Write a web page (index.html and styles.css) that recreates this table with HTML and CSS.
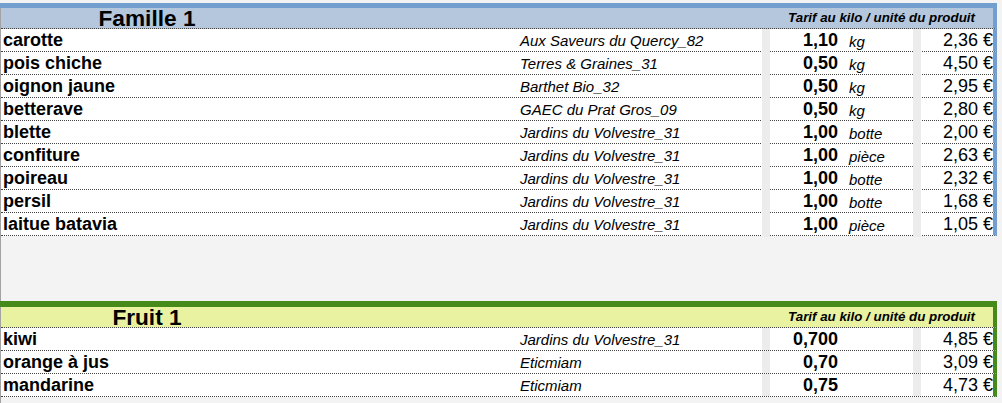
FILE: index.html
```html
<!DOCTYPE html>
<html lang="fr">
<head>
<meta charset="utf-8">
<title>Tarifs</title>
<link rel="stylesheet" href="styles.css">
</head>
<body>
<div class="sheet">
  <section class="group blue">
    <div class="bar"></div>
    <div class="head">
      <div class="title">Famille 1</div>
      <div class="tarif">Tarif au kilo / unité du produit</div>
    </div>
    <div class="row"><div class="name">carotte</div><div class="prod">Aux Saveurs du Quercy_82</div><div class="strip"></div><div class="qty">1,10</div><div class="unit">kg</div><div class="strip"></div><div class="price">2,36 €</div></div>
    <div class="row"><div class="name">pois chiche</div><div class="prod">Terres &amp; Graines_31</div><div class="strip"></div><div class="qty">0,50</div><div class="unit">kg</div><div class="strip"></div><div class="price">4,50 €</div></div>
    <div class="row"><div class="name">oignon jaune</div><div class="prod">Barthet Bio_32</div><div class="strip"></div><div class="qty">0,50</div><div class="unit">kg</div><div class="strip"></div><div class="price">2,95 €</div></div>
    <div class="row"><div class="name">betterave</div><div class="prod">GAEC du Prat Gros_09</div><div class="strip"></div><div class="qty">0,50</div><div class="unit">kg</div><div class="strip"></div><div class="price">2,80 €</div></div>
    <div class="row"><div class="name">blette</div><div class="prod">Jardins du Volvestre_31</div><div class="strip"></div><div class="qty">1,00</div><div class="unit">botte</div><div class="strip"></div><div class="price">2,00 €</div></div>
    <div class="row"><div class="name">confiture</div><div class="prod">Jardins du Volvestre_31</div><div class="strip"></div><div class="qty">1,00</div><div class="unit">pièce</div><div class="strip"></div><div class="price">2,63 €</div></div>
    <div class="row"><div class="name">poireau</div><div class="prod">Jardins du Volvestre_31</div><div class="strip"></div><div class="qty">1,00</div><div class="unit">botte</div><div class="strip"></div><div class="price">2,32 €</div></div>
    <div class="row"><div class="name">persil</div><div class="prod">Jardins du Volvestre_31</div><div class="strip"></div><div class="qty">1,00</div><div class="unit">botte</div><div class="strip"></div><div class="price">1,68 €</div></div>
    <div class="row"><div class="name">laitue batavia</div><div class="prod">Jardins du Volvestre_31</div><div class="strip"></div><div class="qty">1,00</div><div class="unit">pièce</div><div class="strip"></div><div class="price">1,05 €</div></div>
  </section>

  <section class="group green">
    <div class="bar"></div>
    <div class="head">
      <div class="title">Fruit 1</div>
      <div class="tarif">Tarif au kilo / unité du produit</div>
    </div>
    <div class="row"><div class="name">kiwi</div><div class="prod">Jardins du Volvestre_31</div><div class="strip"></div><div class="qty">0,700</div><div class="unit"></div><div class="strip"></div><div class="price">4,85 €</div></div>
    <div class="row"><div class="name">orange à jus</div><div class="prod">Eticmiam</div><div class="strip"></div><div class="qty">0,70</div><div class="unit"></div><div class="strip"></div><div class="price">3,09 €</div></div>
    <div class="row"><div class="name">mandarine</div><div class="prod">Eticmiam</div><div class="strip"></div><div class="qty">0,75</div><div class="unit"></div><div class="strip"></div><div class="price">4,73 €</div></div>
  </section>
</div>
</body>
</html>
```

FILE: styles.css
```css
html, body {
  margin: 0;
  padding: 0;
  background: #f3f3f3;
  font-family: "Liberation Sans", Arial, sans-serif;
  color: #000;
}
body {
  padding-top: 3px;
}
.sheet {
  border-left: 1px solid #a3a3a3;
  width: 996px;
  min-height: 400px;
  display: flex;
  flex-direction: column;
}
.group {
  display: flex;
  flex-direction: column;
}
.group.green {
  margin-top: 65px;
}
.bar {
  margin-left: -1px;
  height: 5px;
}
.blue .bar { background: #729fcf; }
.green .bar { background: #468a1a; height: 6px; }

.head, .row {
  border-right: 4px solid #729fcf;
  border-bottom: 1px dotted #444;
}
.green .head, .green .row {
  border-right-color: #468a1a;
}
.head {
  height: 20px;
  display: grid;
  grid-template-columns: 292px 477px 223px;
  align-items: start;
}
.blue .head { background: #b4c7dc; }
.green .head { background: #e8f2a1; }
.title {
  font-size: 22.67px;
  font-weight: bold;
  text-align: center;
  line-height: 20px;
}
.tarif {
  grid-column: 3;
  font-size: 13.33px;
  font-weight: bold;
  font-style: italic;
  text-align: center;
  line-height: 20px;
}
.row {
  height: 22px;
  background: #fff;
  display: grid;
  grid-template-columns: 516px 245px 8px 73px 70px 8px 72px;
  line-height: 22px;
  white-space: nowrap;
}
.name, .prod, .qty, .price {
  padding-top: 1px;
  line-height: 21px;
}
.name {
  font-size: 18px;
  font-weight: bold;
  padding-left: 2px;
}
.prod {
  font-size: 15px;
  font-style: italic;
  padding-left: 3px;
}
.strip {
  background: #ececec;
}
.qty {
  font-size: 18px;
  font-weight: bold;
  text-align: right;
  padding-right: 5px;
}
.unit {
  font-size: 15px;
  font-style: italic;
  padding-left: 6px;
  padding-top: 2px;
}
.price {
  font-size: 18px;
  text-align: right;
}
```
